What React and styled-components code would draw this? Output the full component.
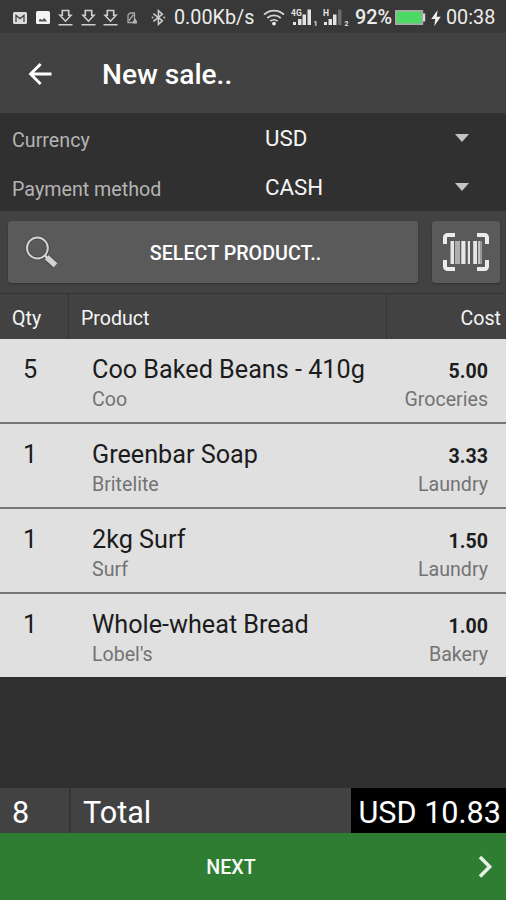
import React from 'react';
import styled, { createGlobalStyle } from 'styled-components';

const products = [
	{ qty: 5, name: 'Coo Baked Beans - 410g', brand: 'Coo', cost: '5.00', category: 'Groceries' },
	{ qty: 1, name: 'Greenbar Soap', brand: 'Britelite', cost: '3.33', category: 'Laundry' },
	{ qty: 1, name: '2kg Surf', brand: 'Surf', cost: '1.50', category: 'Laundry' },
	{ qty: 1, name: 'Whole-wheat Bread', brand: "Lobel's", cost: '1.00', category: 'Bakery' },
];

const MailIcon = () => (
	<svg width="14" height="12" viewBox="0 0 14 12">
		<rect width="14" height="12" rx="1.5" fill="#dcdcdc" />
		<path d="M3 10V3.400L7 6.600l4-3.200V10" fill="none" stroke="#444" strokeWidth="1.300" />
	</svg>
);

const PictureIcon = () => (
	<svg width="14" height="13" viewBox="0 0 14 13">
		<rect width="14" height="13" rx="1.5" fill="#f4f4f4" />
		<path d="M3 10.5V8.7l1.5-1 1.500 1.300 2.500-2 2.500 3.500z" fill="#555" />
	</svg>
);

const DownloadIcon = () => (
	<svg width="15" height="17" viewBox="0 0 15 17">
		<path
			d="M4.3 1.500h6.400v4.800h2.300L7.500 12.200 2 6.300h2.300zM.5 15.700h14"
			fill="none"
			stroke="#cfcfcf"
			strokeWidth="1.600"
		/>
	</svg>
);

const SimIcon = () => (
	<svg width="11" height="12" viewBox="0 0 11 12">
		<path d="M1 10.5V3l2-2h4.5v9.5zM2 8.5l4.5-6" fill="none" stroke="#a8a8a8" strokeWidth="1.3" />
		<path d="M6 11.5V9l1-.8V7h2v1.2l1 .8v2.5z" fill="#b5b5b5" />
	</svg>
);

const BluetoothIcon = () => (
	<svg width="15" height="17" viewBox="0 0 15 17">
		<path
			d="M2.4 4.6l9 7.2-4 3.6V1.6l4 3.6-9 7.2"
			fill="none"
			stroke="#cfcfcf"
			strokeWidth="1.5"
		/>
		<circle cx="1.6" cy="8.5" r="1.1" fill="#bbb" />
		<circle cx="13.2" cy="8.5" r="1.1" fill="#bbb" />
	</svg>
);

const WifiIcon = () => (
	<svg width="22" height="17" viewBox="0 0 22 17">
		<g fill="none" stroke="#d6d6d6" strokeWidth="1.8">
			<path d="M1 5.6a14.4 14.4 0 0 1 20 0" />
			<path d="M4.3 9a9.7 9.7 0 0 1 13.4 0" />
			<path d="M7.4 12.2a5.3 5.3 0 0 1 7.2 0" />
		</g>
		<circle cx="11" cy="14.6" r="1.9" fill="#eee" />
	</svg>
);

const SignalIcon = ({ label, slot, weak }) => (
	<svg width={weak ? 28 : 27} height="18" viewBox={weak ? '0 0 28 18' : '0 0 27 18'}>
		<g fill="#e4e4e4">
			<rect x={weak ? 1 : 2} y="13" width="3" height="3" />
			<rect x={weak ? 5.500 : 7} y="10" width="3.500" height="6" />
			<rect x={weak ? 10 : 11.500} y="5.500" width="3.500" height="10.500" />
			<rect x={weak ? 15 : 16.500} y="0.500" width="3.500" height="15.500" opacity={weak ? 0.3 : 1} />
			<text x="0" y="7" fontSize="8.500" fontWeight="700" fontFamily="Roboto">
				{label}
			</text>
			<text x={weak ? 21.5 : 22.5} y="16.500" fontSize="7" fontWeight="700" fontFamily="Roboto">
				{slot}
			</text>
		</g>
	</svg>
);

const BatteryIcon = () => (
	<svg width="31" height="15" viewBox="0 0 31 15">
		<rect x="0.8" y="0.8" width="26.6" height="13.4" fill="#4cd964" stroke="#b0a6b0" strokeWidth="1.6" />
		<path d="M28 3.5h2.2v8H28z" fill="#d8d8d8" />
	</svg>
);

const BoltIcon = () => (
	<svg width="10" height="16" viewBox="0 0 10 16">
		<path d="M6.6 0L.3 9h3.9L3.3 16 9.8 6.7H5.7z" fill="#f0f0f0" />
	</svg>
);

const BackIcon = () => (
	<svg width="24" height="24" viewBox="0 0 24 24">
		<path d="M23.5 12H2.6M12.6 2L2.600 12l10 10" fill="none" stroke="#fff" strokeWidth="2.9" />
	</svg>
);

const SearchIcon = () => (
	<svg width="34" height="34" viewBox="0 0 34 34">
		<circle cx="12.4" cy="12" r="10.5" fill="none" stroke="#2f2f2f" strokeWidth="4" opacity="0.35" />
		<circle cx="12.4" cy="12" r="10.4" fill="none" stroke="#d2d2d2" strokeWidth="2" />
		<path d="M19.5 19.2l3 3" stroke="#d2d2d2" strokeWidth="2.4" />
		<path d="M22.6 22.2l7.700 7" stroke="#3c3c3c" strokeWidth="8" opacity="0.45" />
		<path d="M21.800 21.400l8.700 7.900" stroke="#d2d2d2" strokeWidth="5.6" />
	</svg>
);

const BarcodeIcon = () => (
	<svg width="46" height="38" viewBox="0 0 46 38">
		<path
			d="M2 11V4.5A2.5 2.5 0 0 1 4.5 2H12M34 2h7.5A2.5 2.5 0 0 1 44 4.5V11M44 27v6.5a2.5 2.5 0 0 1-2.5 2.5H34M12 36H4.5A2.5 2.5 0 0 1 2 33.5V27"
			fill="none"
			stroke="#ececec"
			strokeWidth="4"
		/>
		<g fill="#e6e6e6">
			<rect x="7.5" y="8" width="3.5" height="23" />
			<rect x="12" y="8" width="5" height="23" opacity="0.6" />
			<rect x="18.3" y="8" width="4.2" height="23" />
			<rect x="24.8" y="8" width="2.2" height="23" />
			<rect x="30.2" y="8" width="3.8" height="23" />
			<rect x="35.3" y="8" width="1.5" height="23" />
			<rect x="37.3" y="8" width="1.5" height="23" opacity="0.6" />
		</g>
	</svg>
);

const ChevronIcon = () => (
	<svg width="15" height="24" viewBox="0 0 15 24">
		<path d="M2 2l9.7 9.8L2 21.6" fill="none" stroke="#e6f2e6" strokeWidth="3.5" />
	</svg>
);

const App = () => {
	const count = products.reduce((sum, { qty }) => sum + qty, 0);

	return (
		<>
			<GlobalStyle />
			<Screen>
				<StatusBar>
					<Slot $width={23}><MailIcon /></Slot>
					<Slot $width={22}><PictureIcon /></Slot>
					<Slot $width={23}><DownloadIcon /></Slot>
					<Slot $width={22}><DownloadIcon /></Slot>
					<Slot $width={24}><DownloadIcon /></Slot>
					<Slot $width={24}><SimIcon /></Slot>
					<Slot $width={23}><BluetoothIcon /></Slot>
					<Slot $width={89}>0.00Kb/s</Slot>
					<Slot $width={28}><WifiIcon /></Slot>
					<Slot $width={32}><SignalIcon label="4G" slot="1" /></Slot>
					<Slot $width={32}><SignalIcon label="H" slot="2" weak /></Slot>
					<Slot $width={40} $bold>92%</Slot>
					<Slot $width={36}><BatteryIcon /></Slot>
					<Slot $width={15}><BoltIcon /></Slot>
					<Slot $width={52}>00:38</Slot>
				</StatusBar>

				<AppBar>
					<BackIcon />
					<h1>New sale..</h1>
				</AppBar>

				<Options>
					<Option>
						<label>Currency</label>
						<Select>USD</Select>
					</Option>
					<Option>
						<label>Payment method</label>
						<Select>CASH</Select>
					</Option>
				</Options>

				<Toolbar>
					<SelectButton type="button">
						<SearchIcon />
						<span>SELECT PRODUCT..</span>
					</SelectButton>
					<ScanButton type="button">
						<BarcodeIcon />
					</ScanButton>
				</Toolbar>

				<TableHead>
					<span>Qty</span>
					<span>Product</span>
					<span>Cost</span>
				</TableHead>

				<List>
					{products.map(({ qty, name, brand, cost, category }) => (
						<Item key={name}>
							<Qty>{qty}</Qty>
							<Details>
								<Name>{name}</Name>
								<Note>{brand}</Note>
							</Details>
							<Details $right>
								<Cost>{cost}</Cost>
								<Note>{category}</Note>
							</Details>
						</Item>
					))}
				</List>

				<Total>
					<span>{count}</span>
					<span>Total</span>
					<Amount>USD 10.83</Amount>
				</Total>

				<NextButton type="button">
					<span>NEXT</span>
					<ChevronIcon />
				</NextButton>
			</Screen>
		</>
	);
};

const GlobalStyle = createGlobalStyle`
	* {
		box-sizing: border-box;
		margin: 0;
	}
	body {
		background: #303030;
		font-family: Roboto, 'Liberation Sans', sans-serif;
	}
	button {
		border: none;
		padding: 0;
		font-family: inherit;
		cursor: pointer;
	}
	svg {
		display: block;
		flex-shrink: 0;
	}
`;

const Screen = styled.main`
	width: 506px;
	height: 900px;
	display: flex;
	flex-direction: column;
	overflow: hidden;
	background: #303030;
	color: #fff;
`;

const StatusBar = styled.header`
	height: 33px;
	padding: 2px 0 0 13px;
	display: flex;
	align-items: center;
	background: #383838;
	color: #ececec;
	font-size: 19.8px;
`;

const Slot = styled.div`
	width: ${({ $width }) => $width}px;
	flex-shrink: 0;
	font-weight: ${({ $bold }) => ($bold ? 500 : 400)};
	white-space: nowrap;
`;

const AppBar = styled.div`
	height: 80px;
	padding: 2px 28px 0;
	display: flex;
	align-items: center;
	gap: 50px;
	background: #424242;
	h1 {
		font-size: 28.1px;
		font-weight: 500;
	}
`;

const Options = styled.section`
	height: 98px;
	padding-top: 2px;
`;

const Option = styled.div`
	height: 49px;
	padding: 0 37px 0 12px;
	display: grid;
	grid-template-columns: 253px 1fr;
	align-items: center;
	label {
		padding-top: 1px;
		font-size: 19.7px;
		color: #b4b4b4;
	}
`;

const Select = styled.div`
	padding-bottom: 3px;
	display: flex;
	align-items: center;
	justify-content: space-between;
	font-size: 22.3px;
	color: #f5f5f5;
	&::after {
		content: '';
		border: 7px solid transparent;
		border-top: 8px solid #c4c4c4;
		border-bottom: none;
	}
`;

const Toolbar = styled.div`
	height: 82px;
	padding: 10px 6px 10px 8px;
	display: flex;
	justify-content: space-between;
	background: #424242;
`;

const ToolButton = styled.button`
	height: 62px;
	display: flex;
	align-items: center;
	background: #5a5a5b;
	border-radius: 3px;
	box-shadow: 0 1px 2px rgba(0, 0, 0, 0.3);
	color: #fff;
`;

const SelectButton = styled(ToolButton)`
	width: 410px;
	padding: 2px 0 0 17px;
	span {
		flex: 1;
		padding-right: 6px;
		text-align: center;
		font-size: 19.7px;
		font-weight: 500;
	}
`;

const ScanButton = styled(ToolButton)`
	width: 68px;
	justify-content: center;
`;

const TableHead = styled.div`
	height: 46px;
	display: grid;
	grid-template-columns: 69px 318px 1fr;
	background: #424242;
	border-top: 1px solid #343434;
	font-size: 19.6px;
	line-height: 49px;
	color: #f5f5f5;
	span {
		height: 45px;
		padding-left: 12px;
		border-right: 1px solid #353535;
	}
	span:last-child {
		padding: 0 5px 0 0;
		border: none;
		text-align: right;
	}
`;

const List = styled.ul`
	height: 338px;
	padding: 0;
	display: grid;
	grid-template-rows: repeat(4, 1fr);
	gap: 2px;
	background: #757575;
	list-style: none;
`;

const Item = styled.li`
	padding: 15px 18px 0 0;
	display: grid;
	grid-template-columns: 92px 1fr auto;
	background: #e0e0e0;
	color: #1c1c1c;
`;

const Qty = styled.span`
	padding-left: 23px;
	font-size: 25.3px;
	line-height: 32px;
`;

const Details = styled.div`
	display: flex;
	flex-direction: column;
	text-align: ${({ $right }) => ($right ? 'right' : 'left')};
`;

const Name = styled.span`
	font-size: 25.2px;
	line-height: 32px;
`;

const Cost = styled.span`
	padding-top: 4px;
	font-size: 19.6px;
	font-weight: 700;
	line-height: 28px;
`;

const Note = styled.span`
	font-size: 19.6px;
	line-height: 28px;
	color: #737373;
`;

const Total = styled.div`
	height: 45px;
	margin-top: auto;
	display: grid;
	grid-template-columns: 71px 1fr 155px;
	background: #424242;
	font-size: 30.6px;
	line-height: 49px;
	span {
		height: 45px;
		padding-left: 12px;
	}
	span:first-child {
		border-right: 2px solid #353535;
	}
`;

const Amount = styled.div`
	height: 45px;
	padding-right: 5px;
	background: #000;
	text-align: right;
	white-space: nowrap;
`;

const NextButton = styled.button`
	height: 67px;
	padding: 1px 13px 0 28px;
	display: flex;
	align-items: center;
	background: #2e7d32;
	color: #f4faf4;
	span {
		flex: 1;
		padding-right: 44px;
		text-align: center;
		font-size: 19.7px;
		font-weight: 500;
	}
`;

export default App;
